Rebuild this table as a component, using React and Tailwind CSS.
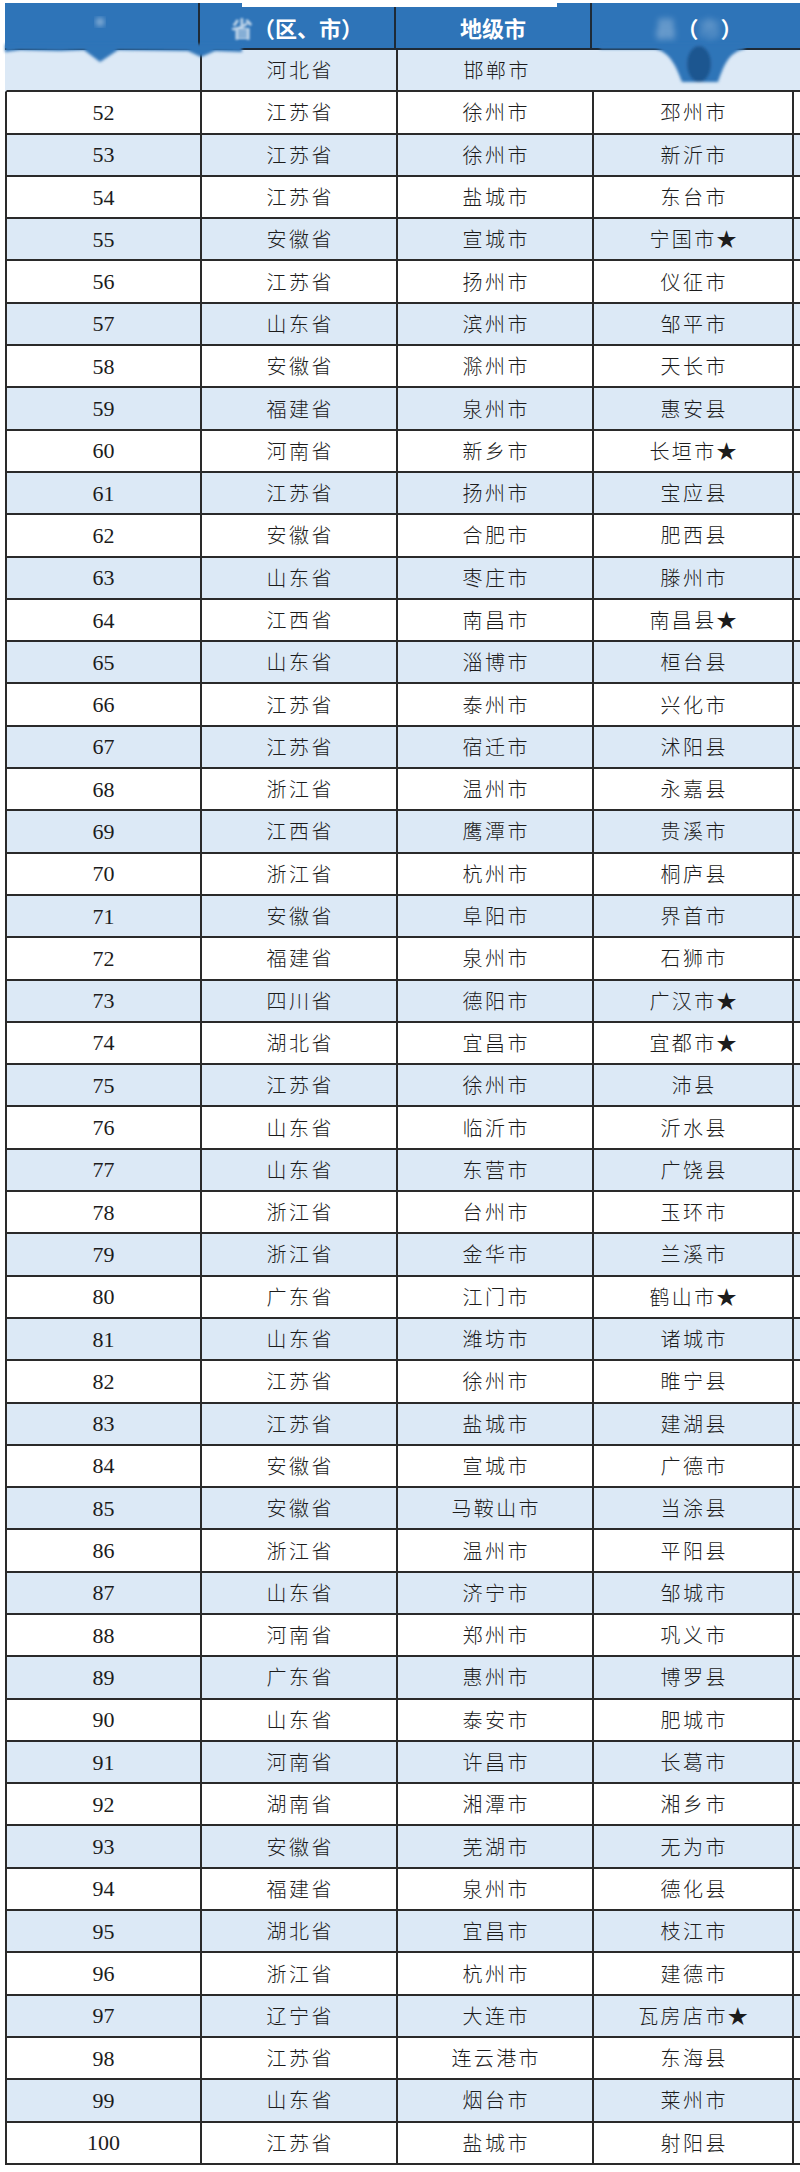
const rows = [
  ['', '河北省', '邯郸市', ''],
  ['52', '江苏省', '徐州市', '邳州市'],
  ['53', '江苏省', '徐州市', '新沂市'],
  ['54', '江苏省', '盐城市', '东台市'],
  ['55', '安徽省', '宣城市', '宁国市★'],
  ['56', '江苏省', '扬州市', '仪征市'],
  ['57', '山东省', '滨州市', '邹平市'],
  ['58', '安徽省', '滁州市', '天长市'],
  ['59', '福建省', '泉州市', '惠安县'],
  ['60', '河南省', '新乡市', '长垣市★'],
  ['61', '江苏省', '扬州市', '宝应县'],
  ['62', '安徽省', '合肥市', '肥西县'],
  ['63', '山东省', '枣庄市', '滕州市'],
  ['64', '江西省', '南昌市', '南昌县★'],
  ['65', '山东省', '淄博市', '桓台县'],
  ['66', '江苏省', '泰州市', '兴化市'],
  ['67', '江苏省', '宿迁市', '沭阳县'],
  ['68', '浙江省', '温州市', '永嘉县'],
  ['69', '江西省', '鹰潭市', '贵溪市'],
  ['70', '浙江省', '杭州市', '桐庐县'],
  ['71', '安徽省', '阜阳市', '界首市'],
  ['72', '福建省', '泉州市', '石狮市'],
  ['73', '四川省', '德阳市', '广汉市★'],
  ['74', '湖北省', '宜昌市', '宜都市★'],
  ['75', '江苏省', '徐州市', '沛县'],
  ['76', '山东省', '临沂市', '沂水县'],
  ['77', '山东省', '东营市', '广饶县'],
  ['78', '浙江省', '台州市', '玉环市'],
  ['79', '浙江省', '金华市', '兰溪市'],
  ['80', '广东省', '江门市', '鹤山市★'],
  ['81', '山东省', '潍坊市', '诸城市'],
  ['82', '江苏省', '徐州市', '睢宁县'],
  ['83', '江苏省', '盐城市', '建湖县'],
  ['84', '安徽省', '宣城市', '广德市'],
  ['85', '安徽省', '马鞍山市', '当涂县'],
  ['86', '浙江省', '温州市', '平阳县'],
  ['87', '山东省', '济宁市', '邹城市'],
  ['88', '河南省', '郑州市', '巩义市'],
  ['89', '广东省', '惠州市', '博罗县'],
  ['90', '山东省', '泰安市', '肥城市'],
  ['91', '河南省', '许昌市', '长葛市'],
  ['92', '湖南省', '湘潭市', '湘乡市'],
  ['93', '安徽省', '芜湖市', '无为市'],
  ['94', '福建省', '泉州市', '德化县'],
  ['95', '湖北省', '宜昌市', '枝江市'],
  ['96', '浙江省', '杭州市', '建德市'],
  ['97', '辽宁省', '大连市', '瓦房店市★'],
  ['98', '江苏省', '连云港市', '东海县'],
  ['99', '山东省', '烟台市', '莱州市'],
  ['100', '江苏省', '盐城市', '射阳县'],
]

const cjk = "font-['Noto_Sans_CJK_SC',sans-serif]"

function Cell({ children, num, noRight }) {
  return (
    <div className={`flex items-center justify-center ${noRight ? '' : 'border-r-2 border-[#2a2a2a]'}`}>
      {num ? (
        <span className="font-['Liberation_Serif',serif] text-[22px] text-[#1c1c1c]">{children}</span>
      ) : (
        <span className={`${cjk} font-light text-[20px] tracking-[0.12em] pl-[0.12em] text-[#1c1c1c]`}>{children}</span>
      )}
    </div>
  )
}

// leftover smudges from a removed watermark, drawn over the header
function Smudges() {
  return (
    <svg className="absolute left-0 top-0 pointer-events-none" width="800" height="100" viewBox="0 0 800 100">
      <defs>
        <filter id="soft" x="-20%" y="-20%" width="140%" height="140%">
          <feGaussianBlur stdDeviation="1.6" />
        </filter>
        <filter id="softer" x="-50%" y="-50%" width="200%" height="200%">
          <feGaussianBlur stdDeviation="3" />
        </filter>
      </defs>
      <g filter="url(#soft)">
        <path d="M5 44 L242 44 L242 52 L215 51 L201 57 L188 51 L118 50 L100 62 L84 50 L60 51 L20 50 L5 52 Z" fill="#2e74b8" />
        <path d="M600 44 L745 44 L745 49 C728 52 724 66 718 82 L682 82 C676 66 670 52 655 49 L600 49 Z" fill="#2e74b8" />
        <ellipse cx="699" cy="64" rx="12" ry="18" fill="#1f5690" />
      </g>
      <circle cx="100" cy="22" r="3" fill="#e8f0f8" filter="url(#softer)" />
    </svg>
  )
}

export default function App() {
  return (
    <div className="relative w-[800px] bg-white pb-[7px]">
      <div className="pt-[3px] ml-[5px]">
        <div className="grid grid-cols-[195px_196px_196px_203px] h-[47px] bg-[#2e74b8] border-b-2 border-[#1e2a36] text-white">
          <div className="border-r-2 border-[#1e2a36]" />
          <div className={`flex items-center justify-center border-r-2 border-[#1e2a36] ${cjk} font-bold text-[22px] pt-[4px]`}>
            <span className="opacity-70 blur-[1px]">省</span>
            <span>（区、市）</span>
          </div>
          <div className={`flex items-center justify-center border-r-2 border-[#1e2a36] ${cjk} font-bold text-[22px] pt-[4px]`}>
            地级市
          </div>
          <div className={`flex items-center justify-center ${cjk} font-bold text-[22px] pt-[4px] pl-[10px]`}>
            <span className="opacity-40 blur-[3px]">县</span>
            <span>（</span>
            <span className="opacity-30 blur-[3px]">市</span>
            <span>）</span>
          </div>
        </div>
        {rows.map((r, i) => (
          <div
            key={i}
            className={`grid grid-cols-[195px_196px_196px_200px] h-[42.3px] border-b-2 border-[#2a2a2a] ${
              i === 0 ? 'border-l-2 border-l-[#dce9f6]' : 'border-l-2 border-l-[#2a2a2a]'
            } ${i % 2 === 0 ? 'bg-[#dce9f6]' : 'bg-white'}`}
          >
            <Cell num>{r[0]}</Cell>
            <Cell>{r[1]}</Cell>
            <Cell noRight={i === 0}>{r[2]}</Cell>
            <Cell noRight={i === 0}>{r[3]}</Cell>
          </div>
        ))}
      </div>
      <div className="absolute left-[242px] top-0 w-[315px] h-[7px] bg-white" />
      <Smudges />
    </div>
  )
}
